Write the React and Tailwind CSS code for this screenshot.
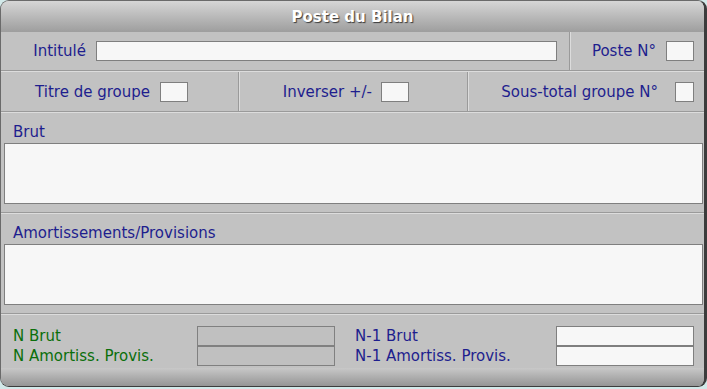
export default function App() {
  const navy = "text-[#1e1e8e]";
  const green = "text-[#0b6f0b]";
  const box = "h-[20px] border border-[#7f7f7f] bg-[#f7f7f7] shrink-0";
  const gbox = "h-[20px] border border-[#808080] bg-[#c0c0c0] shrink-0";
  const hsep = (
    <div className="shrink-0 flex flex-col">
      <div className="h-px bg-[#9a9a9a]" />
      <div className="h-px bg-[#dcdcdc]" />
    </div>
  );
  const vsep = (
    <div className="shrink-0 flex">
      <div className="w-px bg-[#9a9a9a]" />
      <div className="w-px bg-[#dcdcdc]" />
    </div>
  );
  return (
    <div className="w-[707px] h-[389px] bg-[#d2e9e9] font-['DejaVu_Sans','Verdana',sans-serif] text-[15px] leading-[18px]">
      <div className="w-[707px] h-[387px] flex flex-col overflow-hidden rounded-[9px] border-l border-t border-l-[#6a6a6a] border-t-[#6a6a6a] border-r-[3px] border-r-[#3c3c3c] border-b border-b-[#3c3c3c] bg-[#c2c2c2]">
        <div className="h-[31px] shrink-0 flex items-center justify-center bg-linear-to-b from-[#d6d6d6] to-[#9e9e9e] text-white font-bold text-[15px] [text-shadow:1px_1px_1px_#3a3a3a]">
          Poste du Bilan
        </div>
        <div className="h-[336px] shrink-0 flex flex-col">
          <div className="h-[38px] flex">
            <div className={`w-[568px] flex items-center justify-end gap-[10px] pr-[12px] ${navy}`}>
              <span>Intitulé</span>
              <div className={`${box} w-[461px]`} />
            </div>
            {vsep}
            <div className={`flex-1 flex items-center justify-end gap-[10px] pr-[10px] ${navy}`}>
              <span>Poste N°</span>
              <div className={`${box} w-[28px]`} />
            </div>
          </div>
          {hsep}
          <div className="h-[39px] flex">
            <div className={`w-[237px] flex items-center justify-end gap-[10px] pr-[50px] ${navy}`}>
              <span>Titre de groupe</span>
              <div className={`${box} w-[28px]`} />
            </div>
            {vsep}
            <div className={`w-[227px] flex items-center justify-end gap-[9px] pr-[58px] ${navy}`}>
              <span>Inverser +/-</span>
              <div className={`${box} w-[28px]`} />
            </div>
            {vsep}
            <div className={`flex-1 flex items-center justify-end gap-[17px] pr-[10px] ${navy}`}>
              <span>Sous-total groupe N°</span>
              <div className={`${box} w-[19px]`} />
            </div>
          </div>
          {hsep}
          <div className="flex flex-col pt-[10px] pb-[8px] pl-[3px] pr-[1px]">
            <span className={`pl-[9px] ${navy}`}>Brut</span>
            <div className="mt-[2px] h-[61px] border border-[#7f7f7f] bg-[#f7f7f7]" />
          </div>
          {hsep}
          <div className="flex flex-col pt-[10px] pb-[8px] pl-[3px] pr-[1px]">
            <span className={`pl-[9px] ${navy}`}>Amortissements/Provisions</span>
            <div className="mt-[2px] h-[61px] border border-[#7f7f7f] bg-[#f7f7f7]" />
          </div>
          {hsep}
          <div className="flex-1 flex flex-col pt-[11px]">
            <div className="h-[20px] flex items-center">
              <span className={`w-[196px] pl-[12px] shrink-0 ${green}`}>N Brut</span>
              <div className={`${gbox} w-[138px]`} />
              <span className={`w-[221px] pl-[20px] shrink-0 ${navy}`}>N-1 Brut</span>
              <div className={`${box} w-[138px]`} />
            </div>
            <div className="h-[20px] flex items-center">
              <span className={`w-[196px] pl-[12px] shrink-0 ${green}`}>N Amortiss. Provis.</span>
              <div className={`${gbox} w-[138px]`} />
              <span className={`w-[221px] pl-[20px] shrink-0 ${navy}`}>N-1 Amortiss. Provis.</span>
              <div className={`${box} w-[138px]`} />
            </div>
          </div>
        </div>
        <div className="flex-1 bg-linear-to-b from-[#c8c8c8] to-[#959595]" />
      </div>
    </div>
  );
}
